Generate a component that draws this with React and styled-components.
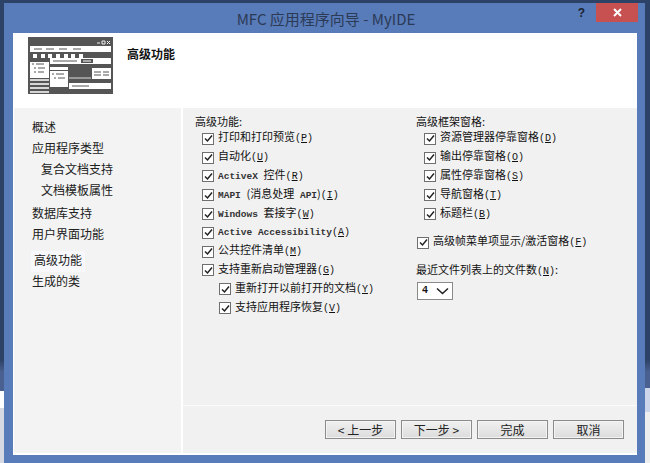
import React from 'react';
import styled, { createGlobalStyle } from 'styled-components';

const GlobalStyle = createGlobalStyle`
    html, body { margin: 0; padding: 0; }
    body { width: 650px; height: 463px; overflow: hidden; }
`;

const Desktop = styled.div`
    position: relative;
    box-sizing: border-box;
    width: 650px;
    height: 463px;
    padding: 3px 5px 0 4px;
    background: linear-gradient(#2c4266 0, #2c4266 360px, #4a6090 372px, #4a6090 463px);
    overflow: hidden;
`;

const LeftBehind = styled.div`
    position: absolute;
    left: 0;
    top: 391px;
    width: 4px;
    height: 72px;
    background: linear-gradient(#fff 0, #fff 17px, #d6d9e2 17px);
`;

const RightBehind = styled.div`
    position: absolute;
    right: 0;
    top: 388px;
    width: 5px;
    height: 75px;
    background: linear-gradient(#cdd5ea 0, #cdd5ea 24px, #eeeeee 24px);
`;

const Window = styled.div`
    position: relative;
    display: flex;
    flex-direction: column;
    box-sizing: border-box;
    height: 460px;
    padding-bottom: 8px;
    background: #587bb9;
    font-family: "Noto Sans CJK SC", sans-serif;
    color: #111;
`;

const TitleBar = styled.div`
    position: relative;
    flex: none;
    height: 30px;
    display: flex;
    align-items: center;
    justify-content: center;
    box-sizing: border-box;
    padding-left: 3px;
    font-size: 15px;
    color: #2b3a55;
`;

const HelpButton = styled.span`
    position: absolute;
    right: 60px;
    top: 3px;
    font: bold 12px "Liberation Sans", sans-serif;
    color: #1c2230;
`;

const CloseButton = styled.div`
    position: absolute;
    right: 7px;
    top: 0;
    width: 42px;
    height: 19px;
    display: flex;
    align-items: center;
    justify-content: center;
    background: #c75050;
`;

const Client = styled.div`
    flex: 1;
    min-height: 0;
    margin: 0 8px 0 9px;
    display: flex;
    flex-direction: column;
    background: #fff;
`;

const Header = styled.div`
    flex: none;
    height: 75px;
    display: flex;
    align-items: flex-start;
    padding: 4px 0 0 15px;
    box-sizing: border-box;
`;

const HeaderTitle = styled.h1`
    margin: 7px 0 0 14px;
    font-size: 12px;
    font-weight: 700;
    line-height: 20px;
    color: #111;
`;

const Body = styled.div`
    flex: 1;
    min-height: 0;
    display: flex;
    gap: 2px;
    padding: 0 0 2px 1px;
`;

const Sidebar = styled.nav`
    flex: none;
    width: 167px;
    box-sizing: border-box;
    padding: 10px 0 0 18px;
    background: #f3f3f3;
    font-size: 12px;
`;

const NavItem = styled.div`
    height: 21px;
    line-height: 17px;
    padding-left: ${(p) => (p.$indent ? 9 : 0)}px;
    margin-top: ${(p) => p.$gap || 0}px;
    color: #202020;
`;

const ActiveNav = styled.span`
    display: inline-block;
    margin-left: -1px;
    padding: 0 3px 0 3px;
    height: 21px;
    line-height: 18px;
    background: #f8f8fc;
`;

const Main = styled.main`
    flex: 1;
    min-width: 0;
    display: flex;
    flex-direction: column;
    background: #f1f1f1;
`;

const Columns = styled.div`
    flex: 1;
    min-height: 0;
    display: grid;
    grid-template-columns: 221px 1fr;
    padding: 6px 0 0 12px;
`;

const Column = styled.div`
    display: flex;
    flex-direction: column;
`;

const GroupLabel = styled.div`
    height: 14px;
    line-height: 15px;
    font-size: 11px;
    margin-top: ${(p) => p.$gap || 0}px;
`;

const Row = styled.label`
    display: flex;
    align-items: center;
    gap: 4px;
    height: 18.8px;
    margin-left: ${(p) => p.$indent || 0}px;
    margin-top: ${(p) => p.$gap || 0}px;
    font-size: 11px;
    white-space: nowrap;
`;

const Box = styled.span`
    flex: none;
    width: 10px;
    height: 10px;
    margin-top: 3px;
    display: flex;
    align-items: center;
    justify-content: center;
    background: #fff;
    border: 1px solid #6f6f6f;
`;

const RowText = styled.span`
    position: relative;
    top: -1px;
`;

const Mono = styled.span`
    font-family: "Liberation Mono", monospace;
    font-size: 9.5px;
    font-weight: 700;
    color: #333;
`;

const Key = styled.span`
    font-family: "Liberation Mono", monospace;
    font-size: 10px;
`;

const KeyLetter = styled.span`
    text-decoration: underline;
`;

const Select = styled.div`
    width: 36px;
    height: 18px;
    display: flex;
    align-items: center;
    justify-content: space-between;
    box-sizing: border-box;
    margin: 6px 0 0 1px;
    padding: 0 3px 0 4px;
    background: #fff;
    border: 1px solid #8a8a8a;
    font: bold 10px "Liberation Mono", monospace;
`;

const Footer = styled.div`
    flex: none;
    height: 48px;
    display: flex;
    gap: 5px;
    justify-content: flex-end;
    padding: 14px 13px 0 0;
    box-sizing: border-box;
    border-top: 1px solid #fbfbfb;
`;

const Button = styled.button`
    width: 71px;
    height: 19px;
    padding: 0;
    font-family: inherit;
    font-size: 12px;
    line-height: 15px;
    color: #222;
    border: 1px solid #8c8c8c;
    box-shadow: inset 0 0 0 1px #f4f4f4;
    background: linear-gradient(#f0f0f0, #dcdcdc);
`;

const Check = () => (
    <Box>
        <svg width="9" height="9" viewBox="0 0 9 9" fill="none">
            <path d="M1 4.5 L3.5 7 L8 1.5" stroke="#222" strokeWidth="1.5" />
        </svg>
    </Box>
);

const Shortcut = ({ k }) => <Key>(<KeyLetter>{k}</KeyLetter>)</Key>;

const CheckRow = ({ indent, gap, children, k }) => (
    <Row $indent={indent} $gap={gap}>
        <Check />
        <RowText>{children}<Shortcut k={k} /></RowText>
    </Row>
);

// small sketch of an MDI window used as the wizard banner
const Banner = () => (
    <svg width="85" height="57" viewBox="0 0 85 57">
        <rect width="85" height="57" fill="#555" />
        <path d="M69 6h3M74 4h3v3h-3zM79 4l3 3M82 4l-3 3" stroke="#eee" fill="none" />
        <rect x="2" y="9" width="81" height="6" fill="#fff" />
        <path d="M6 12h8M18 12h8M31 12h8M45 12h8" stroke="#555" />
        {[5, 13, 20, 28, 36, 43, 51].map((x) => <rect key={x} x={x} y="17" width="4" height="4" fill="#fff" />)}
        <rect x="22" y="21" width="61" height="6" fill="#fff" />
        <path d="M25 24h24" stroke="#555" />
        <rect x="53" y="22" width="12" height="4" fill="#555" />
        <path d="M55 24h8" stroke="#fff" />
        <rect x="2" y="25" width="19" height="16" fill="#fff" />
        <path d="M4 27h2M8 27h8M6 31h2M10 31h7M6 35h2M10 35h6" stroke="#555" />
        <rect x="22" y="30" width="18" height="20" fill="#fff" />
        <rect x="22" y="33" width="18" height="1" fill="#555" />
        <path d="M24 37h2M28 37h8M26 41h2M30 41h7" stroke="#555" />
        <rect x="64" y="31" width="19" height="11" fill="#fff" />
        <path d="M66 35h7M75 35h6M66 38h7M75 38h6" stroke="#555" />
        <path d="M41 41h22" stroke="#ddd" />
        <path d="M2 43h19M2 47h19M2 51h19M2 55h19" stroke="#fff" strokeWidth="1.5" />
        <rect x="41" y="46" width="42" height="6" fill="#fff" />
        <path d="M44 49h17" stroke="#555" />
    </svg>
);

const App = () => (
    <Desktop>
        <GlobalStyle />
        <LeftBehind />
        <RightBehind />
        <Window>
            <TitleBar>
                MFC 应用程序向导 - MyIDE
                <HelpButton>?</HelpButton>
                <CloseButton>
                    <svg width="9" height="9" viewBox="0 0 9 9">
                        <path d="M1 1 L8 8 M8 1 L1 8" stroke="#fff" strokeWidth="2" />
                    </svg>
                </CloseButton>
            </TitleBar>
            <Client>
                <Header>
                    <Banner />
                    <HeaderTitle>高级功能</HeaderTitle>
                </Header>
                <Body>
                    <Sidebar>
                        <NavItem>概述</NavItem>
                        <NavItem>应用程序类型</NavItem>
                        <NavItem $indent>复合文档支持</NavItem>
                        <NavItem $indent>文档模板属性</NavItem>
                        <NavItem $gap={2}>数据库支持</NavItem>
                        <NavItem>用户界面功能</NavItem>
                        <NavItem $gap={5}><ActiveNav>高级功能</ActiveNav></NavItem>
                        <NavItem>生成的类</NavItem>
                    </Sidebar>
                    <Main>
                        <Columns>
                            <Column>
                                <GroupLabel>高级功能:</GroupLabel>
                                <CheckRow indent={7} k="P">打印和打印预览</CheckRow>
                                <CheckRow indent={7} k="U">自动化</CheckRow>
                                <CheckRow indent={7} k="R"><Mono>ActiveX </Mono>控件</CheckRow>
                                <CheckRow indent={7} k="I"><Mono>MAPI </Mono>(消息处理<Mono> API</Mono>)</CheckRow>
                                <CheckRow indent={7} k="W"><Mono>Windows </Mono>套接字</CheckRow>
                                <CheckRow indent={7} k="A"><Mono>Active Accessibility</Mono></CheckRow>
                                <CheckRow indent={7} k="M">公共控件清单</CheckRow>
                                <CheckRow indent={7} k="G">支持重新启动管理器</CheckRow>
                                <CheckRow indent={24} k="Y">重新打开以前打开的文档</CheckRow>
                                <CheckRow indent={24} k="V">支持应用程序恢复</CheckRow>
                            </Column>
                            <Column>
                                <GroupLabel>高级框架窗格:</GroupLabel>
                                <CheckRow indent={8} k="D">资源管理器停靠窗格</CheckRow>
                                <CheckRow indent={8} k="O">输出停靠窗格</CheckRow>
                                <CheckRow indent={8} k="S">属性停靠窗格</CheckRow>
                                <CheckRow indent={8} k="T">导航窗格</CheckRow>
                                <CheckRow indent={8} k="B">标题栏</CheckRow>
                                <CheckRow indent={1} gap={10} k="F">高级帧菜单项显示/激活窗格</CheckRow>
                                <GroupLabel $gap={11}>最近文件列表上的文件数<Shortcut k="N" />:</GroupLabel>
                                <Select>
                                    4
                                    <svg width="13" height="8" viewBox="0 0 13 8" fill="none">
                                        <path d="M1 1.5 L6.5 6.5 L12 1.5" stroke="#222" strokeWidth="1.6" />
                                    </svg>
                                </Select>
                            </Column>
                        </Columns>
                        <Footer>
                            <Button>&lt; 上一步</Button>
                            <Button>下一步 &gt;</Button>
                            <Button>完成</Button>
                            <Button>取消</Button>
                        </Footer>
                    </Main>
                </Body>
            </Client>
        </Window>
    </Desktop>
);

export default App;
